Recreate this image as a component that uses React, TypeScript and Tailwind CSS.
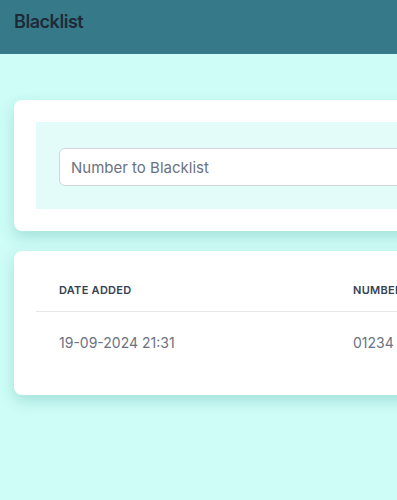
export default function App() {
  const rows = [{ date: "19-09-2024 21:31", number: "01234 567890" }];

  return (
    <div
      className="min-h-screen w-full overflow-hidden bg-[#cefcf6]"
      style={{ fontFamily: "Inter, 'Open Sans', sans-serif" }}
    >
      <div className="flex h-[54px] items-center bg-[#367a8a] px-[14px] pb-[12px]">
        <h1 className="text-[18px] font-semibold tracking-tight text-[#1e2a38]">Blacklist</h1>
      </div>

      <div className="w-[720px] space-y-[20px] px-[14px] pt-[46px]">
        <div className="rounded-lg bg-white p-[22px] shadow-[0_6px_14px_rgba(40,150,140,0.25)]">
          <div className="bg-[#e3fcf9] px-[23px] pb-[23px] pt-[26px]">
            <input
              type="text"
              placeholder="Number to Blacklist"
              className="h-[38px] w-full rounded-md border border-[#d1d5db] bg-white px-[11px] text-[15px] text-gray-700 outline-none placeholder:text-[#6b7280]"
            />
          </div>
        </div>

        <div className="rounded-lg bg-white p-[22px] shadow-[0_6px_14px_rgba(40,150,140,0.25)]">
          <table className="w-full border-collapse text-left">
            <thead>
              <tr className="border-b border-[#e5e7eb]">
                <th className="w-[317px] px-[23px] pb-[12px] pt-[9px] text-[11px] font-semibold tracking-wide text-[#374151]">
                  DATE ADDED
                </th>
                <th className="px-0 pb-[12px] pt-[9px] text-[11px] font-semibold tracking-wide text-[#374151]">
                  NUMBER
                </th>
              </tr>
            </thead>
            <tbody>
              {rows.map((row) => (
                <tr key={row.date}>
                  <td className="px-[23px] py-[20px] text-[14px] text-[#6b7280]">{row.date}</td>
                  <td className="py-[20px] text-[14px] text-[#6b7280]">{row.number}</td>
                </tr>
              ))}
            </tbody>
          </table>
        </div>
      </div>
    </div>
  );
}
